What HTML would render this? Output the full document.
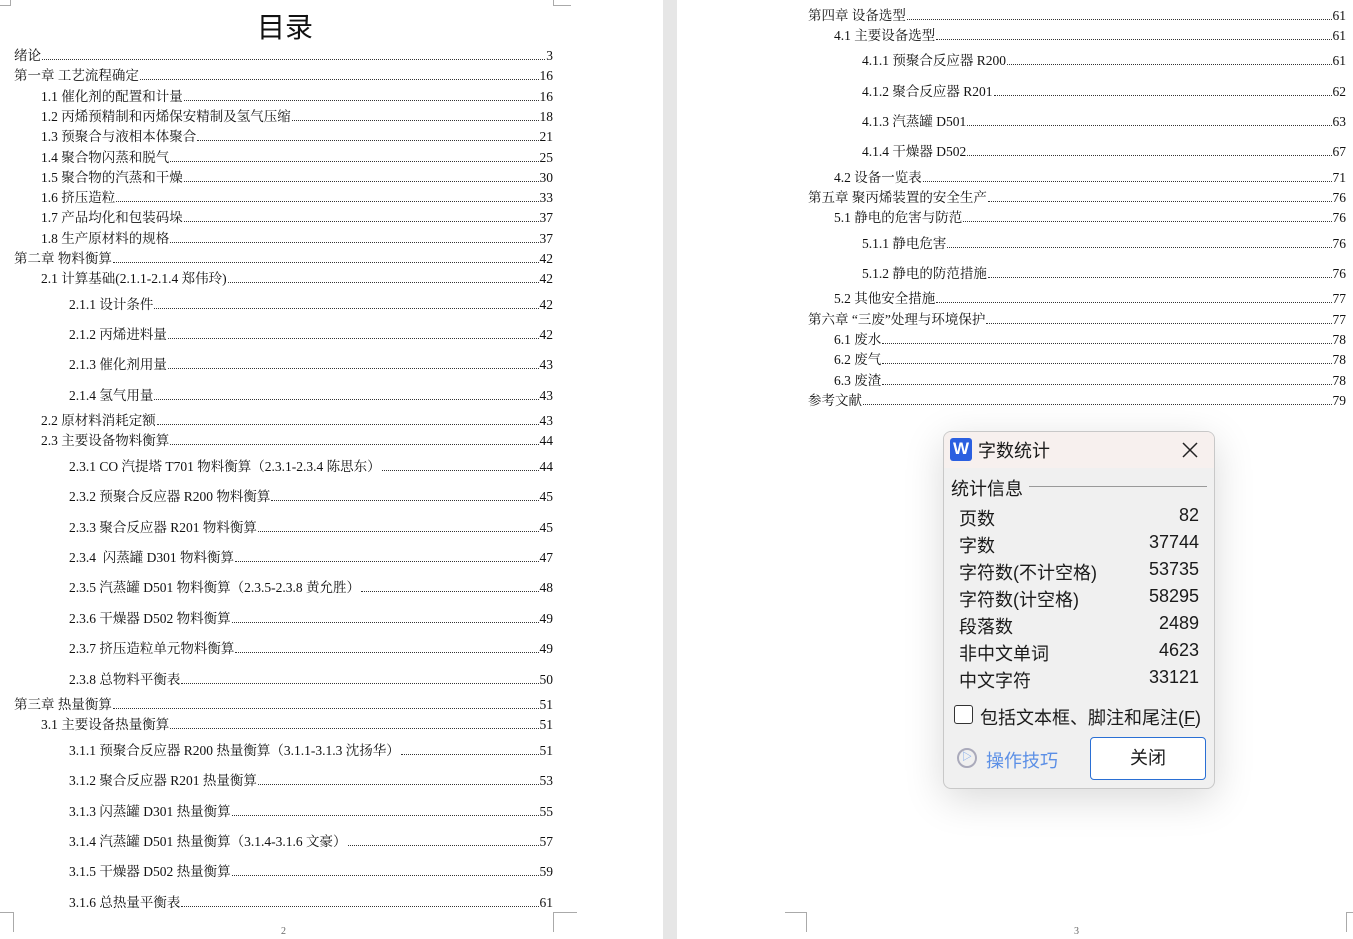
<!DOCTYPE html>
<html><head><meta charset="utf-8"><style>
*{margin:0;padding:0;box-sizing:border-box}
body{width:1353px;height:939px;background:#fff;position:relative;overflow:hidden;font-family:"Liberation Serif","Noto Serif CJK SC",serif;color:#111}
.gap{position:absolute;left:663px;top:0;width:14px;height:939px;background:#e6e6e6}
.l{position:absolute;display:flex;align-items:flex-end;font-size:13.5px;line-height:15px;height:15px;white-space:nowrap}
.l .d{flex:1;border-bottom:1px dotted #333;margin:0 1px 3px 1px}
.t{position:absolute;left:257px;top:6px;font-size:28px;font-family:"Liberation Sans","Noto Sans CJK SC",sans-serif}
.cm{position:absolute;border-color:#aaa;border-style:solid;width:14px;height:14px}
.pn{position:absolute;font-size:10px;color:#666}
.dlg{position:absolute;left:943px;top:431px;width:272px;height:358px;background:#f0f0f0;border:1px solid #c8c8c8;border-radius:8px;box-shadow:0 10px 40px rgba(0,0,0,.15);font-family:"Liberation Sans","Noto Sans CJK SC",sans-serif;font-size:18px;color:#1a1a1a;overflow:hidden}
.hd{height:36px;background:#f7f0ee;position:relative}
.row{position:absolute;left:15px;width:240px;display:flex;justify-content:space-between}
</style></head><body>
<div class="gap"></div>
<div class="cm" style="left:0;top:0;border-width:0 1px 1px 0;width:11px;height:6px"></div>
<div class="cm" style="left:553px;top:0;border-width:0 0 1px 1px;width:18px;height:6px"></div>
<div class="cm" style="left:0;top:912px;border-width:1px 1px 0 0;width:14px;height:20px"></div>
<div class="cm" style="left:553px;top:912px;border-width:1px 0 0 1px;width:24px;height:20px"></div>
<div class="cm" style="left:785px;top:912px;border-width:1px 1px 0 0;width:22px;height:20px"></div>
<div class="cm" style="left:1346px;top:912px;border-width:1px 0 0 1px;width:10px;height:20px"></div>
<div class="pn" style="left:281px;top:926px">2</div>
<div class="pn" style="left:1074px;top:926px">3</div>
<div class="t">目录</div>

<div class="l" style="left:14px;right:800px;top:48px">绪论<span class="d"></span>3</div>
<div class="l" style="left:14px;right:800px;top:68px">第一章 工艺流程确定<span class="d"></span>16</div>
<div class="l" style="left:41px;right:800px;top:89px">1.1 催化剂的配置和计量<span class="d"></span>16</div>
<div class="l" style="left:41px;right:800px;top:109px">1.2 丙烯预精制和丙烯保安精制及氢气压缩<span class="d"></span>18</div>
<div class="l" style="left:41px;right:800px;top:129px">1.3 预聚合与液相本体聚合<span class="d"></span>21</div>
<div class="l" style="left:41px;right:800px;top:150px">1.4 聚合物闪蒸和脱气<span class="d"></span>25</div>
<div class="l" style="left:41px;right:800px;top:170px">1.5 聚合物的汽蒸和干燥<span class="d"></span>30</div>
<div class="l" style="left:41px;right:800px;top:190px">1.6 挤压造粒<span class="d"></span>33</div>
<div class="l" style="left:41px;right:800px;top:210px">1.7 产品均化和包装码垛<span class="d"></span>37</div>
<div class="l" style="left:41px;right:800px;top:231px">1.8 生产原材料的规格<span class="d"></span>37</div>
<div class="l" style="left:14px;right:800px;top:251px">第二章 物料衡算<span class="d"></span>42</div>
<div class="l" style="left:41px;right:800px;top:271px">2.1 计算基础(2.1.1-2.1.4 郑伟玲)<span class="d"></span>42</div>
<div class="l" style="left:69px;right:800px;top:297px">2.1.1 设计条件<span class="d"></span>42</div>
<div class="l" style="left:69px;right:800px;top:327px">2.1.2 丙烯进料量<span class="d"></span>42</div>
<div class="l" style="left:69px;right:800px;top:357px">2.1.3 催化剂用量<span class="d"></span>43</div>
<div class="l" style="left:69px;right:800px;top:388px">2.1.4 氢气用量<span class="d"></span>43</div>
<div class="l" style="left:41px;right:800px;top:413px">2.2 原材料消耗定额<span class="d"></span>43</div>
<div class="l" style="left:41px;right:800px;top:433px">2.3 主要设备物料衡算<span class="d"></span>44</div>
<div class="l" style="left:69px;right:800px;top:459px">2.3.1 CO 汽提塔 T701 物料衡算（2.3.1-2.3.4 陈思东）<span class="d"></span>44</div>
<div class="l" style="left:69px;right:800px;top:489px">2.3.2 预聚合反应器 R200 物料衡算<span class="d"></span>45</div>
<div class="l" style="left:69px;right:800px;top:520px">2.3.3 聚合反应器 R201 物料衡算<span class="d"></span>45</div>
<div class="l" style="left:69px;right:800px;top:550px">2.3.4 &nbsp;闪蒸罐 D301 物料衡算<span class="d"></span>47</div>
<div class="l" style="left:69px;right:800px;top:580px">2.3.5 汽蒸罐 D501 物料衡算（2.3.5-2.3.8 黄允胜）<span class="d"></span>48</div>
<div class="l" style="left:69px;right:800px;top:611px">2.3.6 干燥器 D502 物料衡算<span class="d"></span>49</div>
<div class="l" style="left:69px;right:800px;top:641px">2.3.7 挤压造粒单元物料衡算<span class="d"></span>49</div>
<div class="l" style="left:69px;right:800px;top:672px">2.3.8 总物料平衡表<span class="d"></span>50</div>
<div class="l" style="left:14px;right:800px;top:697px">第三章 热量衡算<span class="d"></span>51</div>
<div class="l" style="left:41px;right:800px;top:717px">3.1 主要设备热量衡算<span class="d"></span>51</div>
<div class="l" style="left:69px;right:800px;top:743px">3.1.1 预聚合反应器 R200 热量衡算（3.1.1-3.1.3 沈扬华）<span class="d"></span>51</div>
<div class="l" style="left:69px;right:800px;top:773px">3.1.2 聚合反应器 R201 热量衡算<span class="d"></span>53</div>
<div class="l" style="left:69px;right:800px;top:804px">3.1.3 闪蒸罐 D301 热量衡算<span class="d"></span>55</div>
<div class="l" style="left:69px;right:800px;top:834px">3.1.4 汽蒸罐 D501 热量衡算（3.1.4-3.1.6 文豪）<span class="d"></span>57</div>
<div class="l" style="left:69px;right:800px;top:864px">3.1.5 干燥器 D502 热量衡算<span class="d"></span>59</div>
<div class="l" style="left:69px;right:800px;top:895px">3.1.6 总热量平衡表<span class="d"></span>61</div>

<div class="l" style="left:808px;right:7px;top:8px">第四章 设备选型<span class="d"></span>61</div>
<div class="l" style="left:834px;right:7px;top:28px">4.1 主要设备选型<span class="d"></span>61</div>
<div class="l" style="left:862px;right:7px;top:53px">4.1.1 预聚合反应器 R200<span class="d"></span>61</div>
<div class="l" style="left:862px;right:7px;top:84px">4.1.2 聚合反应器 R201<span class="d"></span>62</div>
<div class="l" style="left:862px;right:7px;top:114px">4.1.3 汽蒸罐 D501<span class="d"></span>63</div>
<div class="l" style="left:862px;right:7px;top:144px">4.1.4 干燥器 D502<span class="d"></span>67</div>
<div class="l" style="left:834px;right:7px;top:170px">4.2 设备一览表<span class="d"></span>71</div>
<div class="l" style="left:808px;right:7px;top:190px">第五章 聚丙烯装置的安全生产<span class="d"></span>76</div>
<div class="l" style="left:834px;right:7px;top:210px">5.1 静电的危害与防范<span class="d"></span>76</div>
<div class="l" style="left:862px;right:7px;top:236px">5.1.1 静电危害<span class="d"></span>76</div>
<div class="l" style="left:862px;right:7px;top:266px">5.1.2 静电的防范措施<span class="d"></span>76</div>
<div class="l" style="left:834px;right:7px;top:291px">5.2 其他安全措施<span class="d"></span>77</div>
<div class="l" style="left:808px;right:7px;top:312px">第六章 “三废”处理与环境保护<span class="d"></span>77</div>
<div class="l" style="left:834px;right:7px;top:332px">6.1 废水<span class="d"></span>78</div>
<div class="l" style="left:834px;right:7px;top:352px">6.2 废气<span class="d"></span>78</div>
<div class="l" style="left:834px;right:7px;top:373px">6.3 废渣<span class="d"></span>78</div>
<div class="l" style="left:808px;right:7px;top:393px">参考文献<span class="d"></span>79</div>

<div class="dlg">
 <div class="hd">
  <div style="position:absolute;left:6px;top:6px;width:22px;height:23px;background:#2b5fe0;border-radius:3px;color:#fff;font-weight:bold;font-size:17px;text-align:center;line-height:22px">W</div>
  <div style="position:absolute;left:34px;top:5px">字数统计</div>
  <svg style="position:absolute;left:238px;top:10px" width="16" height="16"><path d="M1 1L15 15M15 1L1 15" stroke="#222" stroke-width="1.5"/></svg>
 </div>
 <div style="position:absolute;left:7px;top:43px">统计信息</div>
 <div style="position:absolute;left:85px;top:54px;width:178px;border-top:1px solid #999"></div>
 <div class="row" style="top:73px"><span>页数</span><span>82</span></div>
 <div class="row" style="top:100px"><span>字数</span><span>37744</span></div>
 <div class="row" style="top:127px"><span>字符数(不计空格)</span><span>53735</span></div>
 <div class="row" style="top:154px"><span>字符数(计空格)</span><span>58295</span></div>
 <div class="row" style="top:181px"><span>段落数</span><span>2489</span></div>
 <div class="row" style="top:208px"><span>非中文单词</span><span>4623</span></div>
 <div class="row" style="top:235px"><span>中文字符</span><span>33121</span></div>
 <div style="position:absolute;left:10px;top:273px;width:19px;height:19px;border:1px solid #333;border-radius:3px;background:#fff"></div>
 <div style="position:absolute;left:36px;top:272px">包括文本框、脚注和尾注(<u>F</u>)</div>
 <div style="position:absolute;left:13px;top:316px;width:20px;height:20px;border:2px solid #aab;border-radius:50%;color:#6a9be8;font-size:10px;text-align:center;line-height:16px">▷</div>
 <div style="position:absolute;left:42px;top:315px;color:#5b8fe6">操作技巧</div>
 <div style="position:absolute;left:146px;top:305px;width:116px;height:43px;border:1px solid #2a6fd4;border-radius:4px;background:#fff;text-align:center;line-height:41px">关闭</div>
</div>
</body></html>
